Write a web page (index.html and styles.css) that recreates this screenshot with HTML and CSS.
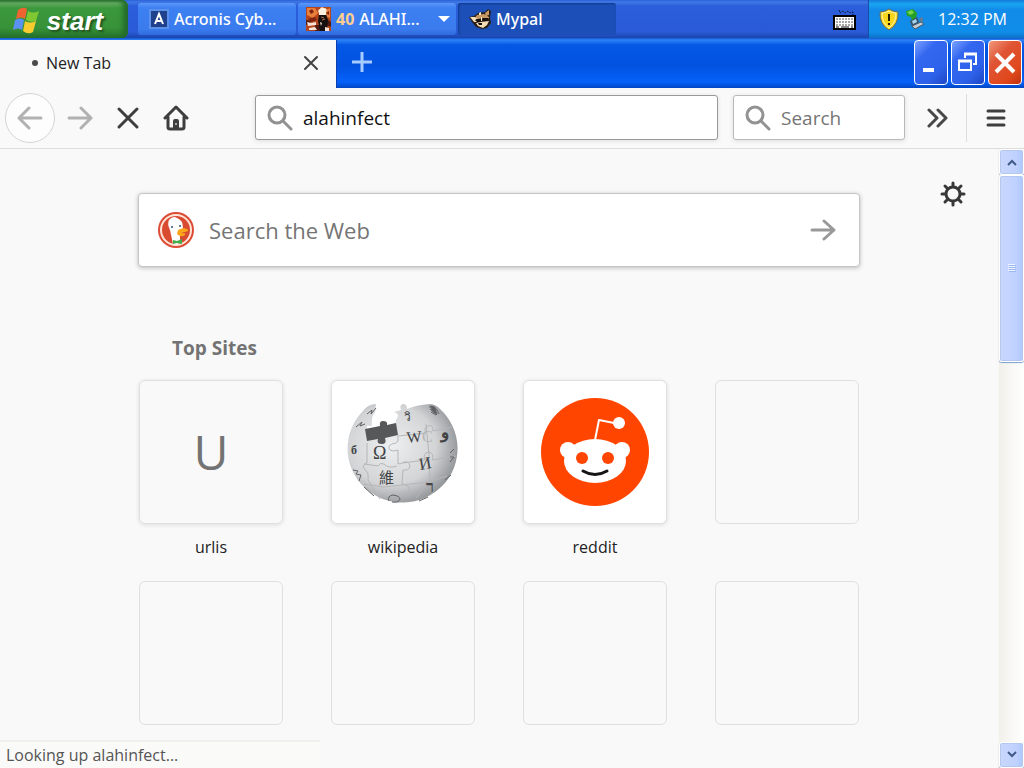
FILE: index.html
```
<!DOCTYPE html>
<html lang="en">
<head>
    <meta charset="UTF-8">
    <meta name="viewport" content="width=device-width, initial-scale=1.0">
    <title>New Tab</title>
    <link rel="stylesheet" href="styles.css">
</head>
<body>
    <!-- Taskbar -->
    <header class="taskbar">
        <button class="start">
            <svg width="30" height="28" viewBox="0 0 30 28">
                <path d="M7 3q5-4 9-1l-2 10q-4-3-9 0z" fill="#f0652f"/>
                <path d="M17 4q5 3 11 0l-3 10q-5 2-10-1z" fill="#7fc832"/>
                <path d="M4 13q5-3 9 0l-2 10q-4-3-9 0z" fill="#5b91f0"/>
                <path d="M14 14q5 3 11 0l-3 11q-5 3-10-1z" fill="#f8cc2f"/>
            </svg>
            <span>start</span>
        </button>
        <nav class="tasks">
            <button class="task">
                <svg width="20" height="20" viewBox="0 0 20 20">
                    <rect width="20" height="20" fill="#5b91e8"/>
                    <rect x="2" y="2" width="16" height="16" fill="#1f418c"/>
                    <path d="M6 15l4-10 4 10M7 12h6" fill="none" stroke="#fff" stroke-width="2"/>
                </svg>
                <span>Acronis Cyb...</span>
            </button>
            <button class="task group">
                <svg width="25" height="24" viewBox="0 0 25 24">
                    <rect width="25" height="24" fill="#b5451c"/>
                    <path d="M1 1h8l3 5-5 5-6-3zM18 4l6-3v10l-6-2z" fill="#e8803c"/>
                    <path d="M3 4l3-2 2 3-3 2zM20 6l3-2v4zM2 12l7-2 2 3-6 2z" fill="#7c2411"/>
                    <path d="M0 13l5 1-2 3-3 1zM9 18h6v6H9zM21 12l4 3v5l-4-2z" fill="#511b12"/>
                    <path d="M13 7h7l2 6-1 11h-7l-2-10z" fill="#171010"/>
                    <path d="M13 6q-2-3 1-4 1-3 4-1 4 0 2 4v3h-7z" fill="#fff1dc"/>
                    <path d="M1 15l4 1 5-1v3l-8 1zM3 21l6-1 2 3H3zM14 15l2 1-1 3zM19 20l4 1v3h-4z" fill="#f6e4d8"/>
                    <path d="M15 10l3 1M16 13l3-1" stroke="#b36a3c"/>
                </svg>
                <b class="count">40</b>
                <span>ALAHI...</span>
                <svg class="drop" width="12" height="8" viewBox="0 0 12 8"><path d="M0 1h12L6 7z" fill="#fff"/></svg>
            </button>
            <button class="task active">
                <svg width="22" height="20" viewBox="0 0 22 20">
                    <path d="M0 8l5-1 4-3 7-1 3-3 3 2-1 6 1 6-4 5-5 1-6-2-4-5z" fill="#2b2018"/>
                    <path d="M16 4l4-3v5l-3 1zM8 6l7-1 5 3 0 2-6-1-5 1-3-1z" fill="#c79a66"/>
                    <path d="M1 8l5 0 3 2-3 1 2 2-3 0zM7 14l5-1 8-1-2 4-4 3-5-2z" fill="#f5ddb5"/>
                    <path d="M7 10l5 0 0 3-4 0zM14 9l6 0-2 3-4 0z" fill="#16100e"/>
                    <path d="M9 14l4 0 0 2-3 0z" fill="#16100e"/>
                    <path d="M10 4l2-1v3l-2 0zM12 8l1 0 0 4-1 0z" fill="#ffe7bb"/>
                </svg>
                <span>Mypal</span>
            </button>
        </nav>
        <button class="keyboard" aria-label="Keyboard">
            <svg width="23" height="21" viewBox="0 0 23 21">
                <path d="M6 1l1 3 3-2 2 2 3-2 2 2 3-1v4" fill="none" stroke="#101b3c" stroke-width="1" stroke-dasharray="2 1"/>
                <rect x="1" y="7" width="21" height="13" fill="#fff" stroke="#000" stroke-width="2"/>
                <path d="M3 10h17M3 13h17M3 16h17" stroke="#555" stroke-width="1" stroke-dasharray="2 1"/>
                <path d="M3 18h3M8 18h8M18 18h2" stroke="#111" stroke-width="1"/>
            </svg>
        </button>
        <div class="tray">
            <svg width="20" height="23" viewBox="0 0 20 23">
                <path d="M10 1q4 3 9 3 1 12-9 18Q0 16 1 4q5 0 9-3z" fill="#f7d61b" stroke="#626b61"/>
                <path d="M10 3q3 2 7 2 0 10-7 15Q3 15 3 5q4 0 7-2z" fill="none" stroke="#fff6b0"/>
                <path d="M10 6v7M10 15v2" stroke="#242000" stroke-width="2"/>
            </svg>
            <svg width="20" height="21" viewBox="0 0 20 21">
                <path d="M1 2l7-2 4 4-1 5-4 3-1-4-4-1z" fill="#259f25"/>
                <path d="M2 3l5-2 2 3-4 2z" fill="#72d44b"/>
                <path d="M5 12l7-4 2 5-7 5z" fill="#38556b"/>
                <path d="M7 12l4-2 1 3-4 2z" fill="#a8d4ef"/>
                <path d="M7 17l9-4 3 2-9 5z" fill="#c5ccd2" stroke="#4b5965"/>
                <path d="M14 10l3-2 1 4-2 1z" fill="#6e7886"/>
            </svg>
            <time>12:32 PM</time>
        </div>
    </header>

    <!-- Window title bar with tabs -->
    <div class="titlebar">
        <div class="tab">
            <span class="dot"></span>
            <span>New Tab</span>
            <button class="close-tab" aria-label="Close tab">
                <svg width="16" height="16" viewBox="0 0 16 16"><path d="M2 2l12 12M14 2L2 14" fill="none" stroke="#444" stroke-width="2" stroke-linecap="round"/></svg>
            </button>
        </div>
        <button class="new-tab" aria-label="New tab">
            <svg width="22" height="22" viewBox="0 0 22 22"><path d="M11 1v20M1 11h20" stroke="#a6cbff" stroke-width="3"/></svg>
        </button>
        <div class="window-buttons">
            <button aria-label="Minimize"><svg width="26" height="26" viewBox="0 0 26 26"><path d="M5 20h11" stroke="#fff" stroke-width="4"/></svg></button>
            <button aria-label="Restore"><svg width="26" height="26" viewBox="0 0 26 26"><path d="M10 8V4h11v10h-3" fill="none" stroke="#fff" stroke-width="2"/><path d="M9 4h13" stroke="#fff" stroke-width="3"/><path d="M4 11h12v9H4z" fill="none" stroke="#fff" stroke-width="2"/><path d="M3 11h14" stroke="#fff" stroke-width="3"/></svg></button>
            <button class="close" aria-label="Close"><svg width="26" height="26" viewBox="0 0 26 26"><path d="M4 4l18 18M22 4L4 22" stroke="#fff" stroke-width="4"/></svg></button>
        </div>
    </div>

    <!-- Navigation toolbar -->
    <div class="toolbar">
        <button class="back" aria-label="Back">
            <svg width="26" height="24" viewBox="0 0 26 24"><path d="M24 12H2M12 2L2 12l10 10" fill="none" stroke="#b1b1b1" stroke-width="3" stroke-linecap="round" stroke-linejoin="round"/></svg>
        </button>
        <button class="nav-button" aria-label="Forward">
            <svg width="26" height="24" viewBox="0 0 26 24"><path d="M2 12h22M14 2l10 10-10 10" fill="none" stroke="#b1b1b1" stroke-width="3" stroke-linecap="round" stroke-linejoin="round"/></svg>
        </button>
        <button class="nav-button" aria-label="Stop">
            <svg width="24" height="24" viewBox="0 0 24 24"><path d="M3 3l18 18M21 3L3 21" stroke="#3e3e3e" stroke-width="3" stroke-linecap="round"/></svg>
        </button>
        <button class="nav-button" aria-label="Home">
            <svg width="26" height="26" viewBox="0 0 26 26"><path d="M2 13L13 2l11 11M5 12v10q0 2 2 2h12q2 0 2-2V12" fill="none" stroke="#3e3e3e" stroke-width="3" stroke-linecap="round" stroke-linejoin="round"/><path d="M10 23v-7q0-2 2-2h2q2 0 2 2v7z" fill="#3e3e3e"/><path d="M13 18v2" stroke="#aaa" stroke-width="2"/></svg>
        </button>
        <label class="field address">
            <svg width="26" height="26" viewBox="0 0 26 26"><circle cx="10" cy="10" r="8" fill="none" stroke="#929292" stroke-width="3"/><path d="M16 16l8 8" stroke="#929292" stroke-width="3" stroke-linecap="round"/></svg>
            <input type="text" value="alahinfect" aria-label="Address">
        </label>
        <label class="field search">
            <svg width="26" height="26" viewBox="0 0 26 26"><circle cx="10" cy="10" r="8" fill="none" stroke="#929292" stroke-width="3"/><path d="M16 16l8 8" stroke="#929292" stroke-width="3" stroke-linecap="round"/></svg>
            <input type="text" placeholder="Search" aria-label="Search">
        </label>
        <button class="more" aria-label="More tools">
            <svg width="22" height="20" viewBox="0 0 22 20"><path d="M2 2l8 8-8 8M11 2l8 8-8 8" fill="none" stroke="#484848" stroke-width="3" stroke-linecap="round" stroke-linejoin="round"/></svg>
        </button>
        <button class="menu" aria-label="Menu">
            <svg width="20" height="20" viewBox="0 0 20 20"><path d="M2 3h16M2 10h16M2 17h16" stroke="#3e3e3e" stroke-width="3" stroke-linecap="round"/></svg>
        </button>
    </div>

    <div class="viewport">
        <main class="page">
            <button class="settings" aria-label="Settings">
                <svg width="26" height="26" viewBox="0 0 26 26" fill="none" stroke="#383838" stroke-linecap="round"><circle cx="13" cy="13" r="7" stroke-width="3"/><path d="M13 5V2M13 21v3M5 13H2M21 13h3M7 7L5 5M19 7l2-2M7 19l-2 2M19 19l2 2" stroke-width="3"/></svg>
            </button>
            <div class="content">
                <form class="web-search">
                    <svg width="38" height="38" viewBox="0 0 38 38">
                        <circle cx="19" cy="19" r="18" fill="#dc4c35"/>
                        <circle cx="19" cy="19" r="15" fill="#d94b30" stroke="#ffe4d8" stroke-width="2"/>
                        <path d="M12 9q4-5 8-2 6 2 6 10l-3 5 0 10q-4 2-7 1l-3-14q-3-6-1-10z" fill="#fff"/>
                        <path d="M21 19q5-3 9-1 3 2-2 3l-4 1q6 0 4 2-4 3-8-1z" fill="#fba51a"/>
                        <path d="M16 29l4 1 5-2v5l-5-1-4 1z" fill="#43ad4b"/>
                        <circle cx="15" cy="16" r="1" fill="#345173"/><circle cx="23" cy="15" r="1" fill="#345173"/>
                    </svg>
                    <input type="text" placeholder="Search the Web" aria-label="Search the Web">
                    <button type="submit" aria-label="Go">
                        <svg width="26" height="22" viewBox="0 0 26 22"><path d="M2 11h22M14 2l10 9-10 9" fill="none" stroke="#999" stroke-width="3" stroke-linecap="round" stroke-linejoin="round"/></svg>
                    </button>
                </form>
                <h1>Top Sites</h1>
                <ul class="sites">
                    <li><a href="#"><span class="tile letter">U</span><span>urlis</span></a></li>
                    <li><a href="#">
                        <span class="tile white">
                            <svg width="112" height="104" viewBox="0 0 112 104">
                                <defs>
                                    <radialGradient id="globe" cx="40%" cy="42%" r="62%">
                                        <stop offset="0" stop-color="#eeeff0"/><stop offset="65%" stop-color="#d3d4d6"/><stop offset="100%" stop-color="#929598"/>
                                    </radialGradient>
                                </defs>
                                <path d="M29 4q-8 0-13 7A55 54 0 1 0 93 9q-5-5-10-5-14 1-23 5 0-5-4-5-4 1-2 6l-7 2q6 2 3 6-2 3-1 8l-29 6v-6h5q-1-9 3-14z" fill="url(#globe)"/>
                                <path d="M18 29l15-3q-1-5 3-5 5 0 4 4l9-2 2 12-13 3q2 6-3 6-6 0-4-5l-11 2z" fill="#56585a"/>
                                <path d="M20 43v20q-6 2-2 7 4 2 3 10l12 19M51 36v5q-2 3-6 3-5 2-2 6 3 2 8 0v14q3 0 6-2 5-1 6 4-1 5-7 4l-1 14q8 1 7 6-2 5-8 3l-2 8M17 64l14 2q2-4 6-2 4 5 13 2M56 63l22-3q-3-7 4-8 6 2 3 8l24-4M79 24l3 31 1 25-14 18M51 36l28-3q-3-5 2-7 5-2 5 5l19-4M17 84l20 3 18-2 26-3 19-6" fill="none" stroke="#b4b6b8" stroke-width="1"/>
                                <g class="globe-text">
                                    <text x="26" y="59" font-size="18">Ω</text>
                                    <text x="60" y="43" font-size="16" transform="rotate(-5 60 43)">W</text>
                                    <text x="73" y="70" font-size="17" transform="rotate(-10 73 70)">И</text>
                                    <text x="32" y="83" font-size="15">維</text>
                                    <text x="79" y="92" font-size="16" font-weight="bold">ר</text>
                                    <text x="94" y="38" font-size="17" font-weight="bold">و</text>
                                    <text x="57" y="21" font-size="12">วิ</text>
                                    <text x="4" y="54" font-size="12" font-weight="bold">б</text>
                                </g>
                                <path d="M9 27l6-5-2 4 5-2M20 14l5-4-1 4 5-6M6 70l5 1-2 3 5 1-2 6M17 87l10 9M42 101q-2-5 4-6 7 1 7 4-1 4-8 3M82 7q6-3 10 7M83 9l7 6M85 6l5 8M84 12l5 3M103 53l4-4M103 57h4l-4 5M98 80l6-5M72 101l9-4" fill="none" stroke="#606265" stroke-width="1"/>
                                <path d="M83 6q6-2 7 8-5-1-7-8z" fill="#606265"/>
                                <text class="faint-letter" x="75" y="42" font-size="16">C</text>
                            </svg>
                        </span>
                        <span>wikipedia</span>
                    </a></li>
                    <li><a href="#">
                        <span class="tile white">
                            <svg width="108" height="108" viewBox="0 0 108 108">
                                <circle cx="54" cy="54" r="54" fill="#ff4500"/>
                                <path d="M54 42l4-20 20 4" fill="none" stroke="#fff" stroke-width="2" stroke-linejoin="round"/>
                                <circle cx="78" cy="25" r="6" fill="#fff"/><circle cx="27" cy="52" r="8" fill="#fff"/><circle cx="81" cy="52" r="8" fill="#fff"/>
                                <ellipse cx="54" cy="63" rx="31" ry="22" fill="#fff"/>
                                <circle cx="41" cy="60" r="6" fill="#ff4500"/><circle cx="67" cy="60" r="6" fill="#ff4500"/>
                                <path d="M42 73q12 7 24 0" fill="none" stroke="#151515" stroke-width="3" stroke-linecap="round"/>
                            </svg>
                        </span>
                        <span>reddit</span>
                    </a></li>
                    <li><span class="tile"></span></li>
                    <li><span class="tile"></span></li>
                    <li><span class="tile"></span></li>
                    <li><span class="tile"></span></li>
                    <li><span class="tile"></span></li>
                </ul>
            </div>
        </main>
        <div class="scrollbar">
            <button aria-label="Scroll up"><svg width="12" height="8" viewBox="0 0 12 8"><path d="M2 7l4-4 4 4" fill="none" stroke="#405987" stroke-width="2"/></svg></button>
            <div class="track">
                <div class="thumb"><svg width="8" height="9" viewBox="0 0 8 9"><path d="M0 0h7v1H0zM0 2h7v1H0zM0 4h7v1H0zM0 6h7v1H0z" fill="#edf3ff"/><path d="M1 1h7v1H1zM1 3h7v1H1zM1 5h7v1H1zM1 7h7v1H1z" fill="#9db7f0"/></svg></div>
            </div>
            <button aria-label="Scroll down"><svg width="12" height="8" viewBox="0 0 12 8"><path d="M2 1l4 4 4-4" fill="none" stroke="#405987" stroke-width="2"/></svg></button>
        </div>
        <div class="status">Looking up alahinfect...</div>
    </div>
</body>
</html>
```
FILE: styles.css
```
* {
    margin: 0;
    padding: 0;
    box-sizing: border-box;
}
body {
    display: flex;
    flex-direction: column;
    height: 100vh;
    overflow: hidden;
    font-family: "Open Sans", sans-serif;
    font-size: 16px;
    color: #222;
    background: #f9f9f9;
}
button {
    display: flex;
    align-items: center;
    justify-content: center;
    border: none;
    background: none;
    font-family: inherit;
    cursor: pointer;
}
svg {
    display: block;
    flex-shrink: 0;
}
input {
    min-width: 0;
    flex: 1;
    border: none;
    outline: none;
    background: none;
    font-family: inherit;
}
/* Taskbar */
.taskbar {
    display: flex;
    flex-shrink: 0;
    height: 38px;
    color: #fff;
    background: linear-gradient(#2a61d8, #3f78e4 2px, #2b5edb 6px, #2a5ad6 32px, #1b45ae);
}
.start {
    gap: 6px;
    width: 128px;
    padding: 4px 14px 0 0;
    color: #fff;
    font-family: "Liberation Sans", sans-serif;
    font-size: 26px;
    font-weight: bold;
    font-style: italic;
    line-height: 30px;
    text-shadow: 2px 2px 2px #225422;
    border-radius: 0 6px 6px 0;
    background: linear-gradient(#2a742c, #66ad64 3px, #3c983d 8px, #379238 28px, #24712a);
    box-shadow: inset -5px 0 5px #246b2b;
}
.tasks {
    display: flex;
    flex: 1;
    gap: 2px;
    padding: 3px 0 3px 10px;
}
.task {
    justify-content: flex-start;
    gap: 5px;
    width: 158px;
    padding: 0 10px 0 11px;
    color: #fff;
    font-family: "Noto Sans", sans-serif;
    font-size: 16px;
    font-weight: 500;
    white-space: nowrap;
    border-radius: 3px;
    background: linear-gradient(#5c97fa, #3c80f2 5px, #3a7bee 26px, #306bdc);
}
.task.group {
    padding: 0 6px 0 8px;
}
.task.active {
    background: #1c50b8;
    box-shadow: inset 1px 1px 2px #123a8d;
}
.count {
    color: #ffcf91;
}
.drop {
    margin-left: auto;
}
.keyboard {
    width: 48px;
}
.tray {
    display: flex;
    align-items: center;
    gap: 6px;
    padding: 0 17px 0 10px;
    border-left: 1px solid #164fa8;
    background: linear-gradient(#1579db, #19a5f3 4px, #128be8 10px, #108de9 32px, #0b71c7);
}
.tray time {
    padding-left: 7px;
    font-size: 16px;
}
/* Title bar */
.titlebar {
    display: flex;
    flex-shrink: 0;
    height: 50px;
    padding-top: 2px;
    background: linear-gradient(#1555cf, #2c83f7 2px, #0358e5 7px, #0252e0 28px, #0562fa 44px, #0147c3);
}
.tab {
    display: flex;
    align-items: center;
    gap: 8px;
    width: 337px;
    padding: 0 16px 2px 32px;
    background: #f9f9f9;
    border-right: 1px solid #0b3fb0;
}
.dot {
    width: 6px;
    height: 6px;
    border-radius: 50%;
    background: #4a4a4a;
}
.close-tab {
    width: 18px;
    height: 24px;
    margin-left: auto;
}
.new-tab {
    width: 50px;
    padding-bottom: 4px;
}
.window-buttons {
    display: flex;
    gap: 3px;
    margin-left: auto;
    padding: 0 2px 3px 0;
}
.window-buttons button {
    width: 34px;
    border: 1px solid #fff;
    border-radius: 4px;
    background: linear-gradient(135deg, #7ba2ff, #3467f0 30%, #2f62ea 70%, #1c46c4);
}
.window-buttons .close {
    background: linear-gradient(135deg, #f09a7c, #df5535 35%, #e1481c 75%, #bd3310);
}
/* Toolbar */
.toolbar {
    display: flex;
    flex-shrink: 0;
    align-items: center;
    height: 61px;
    padding: 0 0 1px 5px;
    border-bottom: 1px solid #ddd;
}
.back {
    width: 50px;
    height: 50px;
    border: 1px solid #d4d4d8;
    border-radius: 50%;
    background: #fdfdfd;
}
.nav-button {
    width: 48px;
    height: 48px;
}
.back + .nav-button {
    margin-left: 1px;
}
.field {
    display: flex;
    align-items: center;
    gap: 10px;
    height: 45px;
    padding: 0 11px;
    background: #fff;
    border: 1px solid #b9b9b9;
    border-radius: 3px;
    box-shadow: 0 1px 4px #ddd;
}
.field input {
    font-size: 19px;
    color: #111;
}
.address {
    flex: 1;
    margin: 0 15px 0 55px;
    border-color: #999;
}
.search {
    width: 172px;
}
input::placeholder {
    color: #757575;
    opacity: 1;
}
.more {
    width: 61px;
    height: 48px;
    padding-left: 4px;
}
.menu {
    width: 58px;
    height: 48px;
    border-left: 1px solid #ddd;
}
/* New tab page */
.viewport {
    position: relative;
    display: flex;
    flex: 1;
    min-height: 0;
}
.page {
    position: relative;
    flex: 1;
    padding: 44px 20px 0;
    overflow: hidden;
}
.settings {
    position: absolute;
    top: 32px;
    right: 32px;
}
.content {
    max-width: 722px;
    margin: 0 auto;
}
.web-search {
    display: flex;
    align-items: center;
    gap: 14px;
    height: 74px;
    padding: 0 23px 0 18px;
    background: #fff;
    border: 1px solid #c5c5c5;
    border-radius: 4px;
    box-shadow: 0 1px 4px #bbb;
}
.web-search input {
    font-size: 22px;
}
.content h1 {
    margin: 67px 0 18px 34px;
    font-size: 19px;
    line-height: 28px;
    color: #737373;
}
.sites {
    display: grid;
    grid-template-columns: repeat(4, 144px);
    justify-content: center;
    gap: 20px 48px;
    list-style: none;
}
.sites li {
    height: 181px;
}
.sites a {
    color: #222;
    text-align: center;
    text-decoration: none;
    line-height: 24px;
}
.sites a span {
    display: block;
}
.sites .tile,
.sites a .tile {
    display: flex;
    align-items: center;
    justify-content: center;
    height: 144px;
    margin-bottom: 11px;
    border: 1px solid #e0e0e1;
    border-radius: 6px;
}
.sites a .tile {
    box-shadow: 0 1px 4px #ddd;
}
.sites .letter {
    color: #737373;
    font-size: 48px;
}
.sites .white {
    background: #fff;
}
.globe-text {
    font-family: "Liberation Serif", "Noto Sans CJK TC", serif;
    fill: #414345;
}
.faint-letter {
    font-family: "Liberation Serif", serif;
    fill: #b4b6b8;
}
/* Scrollbar */
.scrollbar {
    display: flex;
    flex-direction: column;
    width: 26px;
    padding-left: 1px;
    background: #f8f7f1;
}
.scrollbar button,
.thumb {
    border: 1px solid #fff;
    border-radius: 3px;
    background: linear-gradient(90deg, #c9d7fb, #bfd1ff 70%, #adc8fb);
    box-shadow: inset 0 0 0 1px #b3c7ef, 0 1px 1px #7d9fca;
}
.scrollbar button {
    height: 26px;
}
.track {
    flex: 1;
    background: linear-gradient(90deg, #f1f0ea, #fff);
}
.thumb {
    display: flex;
    align-items: center;
    justify-content: center;
    height: 33%;
    min-height: 26px;
}
.status {
    position: absolute;
    left: 0;
    bottom: 0;
    width: 320px;
    padding: 2px 6px;
    line-height: 22px;
    color: #555;
    background: #fafaf9;
    border-top: 2px solid #f1f0ed;
}
```
